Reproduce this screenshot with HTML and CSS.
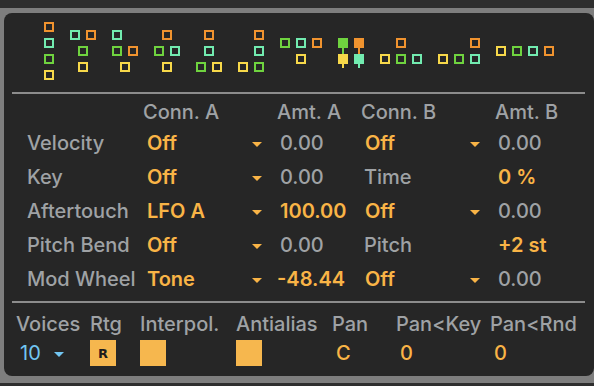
FILE: index.html
```html
<!DOCTYPE html>
<html lang="en">
<head>
    <meta charset="UTF-8">
    <title>Operator - Global</title>
    <link rel="stylesheet" href="styles.css">
</head>
<body>
    <div class="frame">
        <div class="panel">
            <!-- algorithm selector -->
            <svg class="algos" width="590" height="79" viewBox="0 0 590 79">
                <g class="box">
                    <rect class="o" x="41" y="10" width="8" height="8"/>
                    <rect class="a" x="41" y="26" width="8" height="8"/>
                    <rect class="g" x="41" y="42" width="8" height="8"/>
                    <rect class="y" x="41" y="58" width="8" height="8"/>

                    <rect class="a" x="67" y="18" width="8" height="8"/>
                    <rect class="o" x="83" y="18" width="8" height="8"/>
                    <rect class="g" x="75" y="34" width="8" height="8"/>
                    <rect class="y" x="75" y="50" width="8" height="8"/>

                    <rect class="a" x="109" y="18" width="8" height="8"/>
                    <rect class="g" x="109" y="34" width="8" height="8"/>
                    <rect class="o" x="125" y="34" width="8" height="8"/>
                    <rect class="y" x="117" y="50" width="8" height="8"/>

                    <rect class="o" x="159" y="18" width="8" height="8"/>
                    <rect class="g" x="151" y="34" width="8" height="8"/>
                    <rect class="a" x="167" y="34" width="8" height="8"/>
                    <rect class="y" x="159" y="50" width="8" height="8"/>

                    <rect class="o" x="201" y="18" width="8" height="8"/>
                    <rect class="a" x="201" y="34" width="8" height="8"/>
                    <rect class="g" x="193" y="50" width="8" height="8"/>
                    <rect class="y" x="209" y="50" width="8" height="8"/>

                    <rect class="o" x="251" y="18" width="8" height="8"/>
                    <rect class="a" x="251" y="34" width="8" height="8"/>
                    <rect class="y" x="235" y="50" width="8" height="8"/>
                    <rect class="g" x="251" y="50" width="8" height="8"/>

                    <rect class="g" x="277" y="26" width="8" height="8"/>
                    <rect class="a" x="293" y="26" width="8" height="8"/>
                    <rect class="o" x="309" y="26" width="8" height="8"/>
                    <rect class="y" x="293" y="42" width="8" height="8"/>

                    <rect class="o" x="393" y="26" width="8" height="8"/>
                    <rect class="y" x="377" y="42" width="8" height="8"/>
                    <rect class="g" x="393" y="42" width="8" height="8"/>
                    <rect class="a" x="409" y="42" width="8" height="8"/>

                    <rect class="o" x="467" y="26" width="8" height="8"/>
                    <rect class="y" x="435" y="42" width="8" height="8"/>
                    <rect class="g" x="451" y="42" width="8" height="8"/>
                    <rect class="a" x="467" y="42" width="8" height="8"/>

                    <rect class="y" x="493" y="34" width="8" height="8"/>
                    <rect class="g" x="509" y="34" width="8" height="8"/>
                    <rect class="a" x="525" y="34" width="8" height="8"/>
                    <rect class="o" x="541" y="34" width="8" height="8"/>
                </g>
                <!-- selected algorithm -->
                <g class="fill">
                    <rect class="g" x="338" y="35" width="2" height="6"/>
                    <rect class="y" x="338" y="51" width="2" height="4"/>
                    <rect class="o" x="354" y="35" width="2" height="6"/>
                    <rect class="a" x="354" y="51" width="2" height="4"/>
                    <rect class="g" x="334" y="25" width="10" height="10"/>
                    <rect class="o" x="350" y="25" width="10" height="10"/>
                    <rect class="y" x="334" y="41" width="10" height="10"/>
                    <rect class="a" x="350" y="41" width="10" height="10"/>
                </g>
            </svg>

            <div class="rule"></div>

            <div class="matrix">
                <div></div>
                <div class="hd">Conn. A</div>
                <div class="hd">Amt. A</div>
                <div class="hd">Conn. B</div>
                <div class="hd">Amt. B</div>

                <div class="lbl">Velocity</div>
                <div class="menu">Off</div>
                <div class="num">0.00</div>
                <div class="menu">Off</div>
                <div class="num">0.00</div>

                <div class="lbl">Key</div>
                <div class="menu">Off</div>
                <div class="num">0.00</div>
                <div class="num">Time</div>
                <div class="num on">0 %</div>

                <div class="lbl">Aftertouch</div>
                <div class="menu">LFO A</div>
                <div class="num on">100.00</div>
                <div class="menu">Off</div>
                <div class="num">0.00</div>

                <div class="lbl">Pitch Bend</div>
                <div class="menu">Off</div>
                <div class="num">0.00</div>
                <div class="num">Pitch</div>
                <div class="num on">+2 st</div>

                <div class="lbl">Mod Wheel</div>
                <div class="menu">Tone</div>
                <div class="num on neg">-48.44</div>
                <div class="menu">Off</div>
                <div class="num">0.00</div>
            </div>

            <div class="rule"></div>

            <div class="globals">
                <div class="lbl">Voices</div>
                <div class="lbl">Rtg</div>
                <div class="lbl">Interpol.</div>
                <div class="lbl">Antialias</div>
                <div class="lbl">Pan</div>
                <div class="lbl">Pan&lt;Key</div>
                <div class="lbl">Pan&lt;Rnd</div>

                <div class="voices">10<span class="arrow"></span></div>
                <div><span class="toggle">R</span></div>
                <div><span class="toggle"></span></div>
                <div><span class="toggle"></span></div>
                <div class="num on">C</div>
                <div class="num on">0</div>
                <div class="num on">0</div>
            </div>
        </div>
    </div>
</body>
</html>
```

FILE: styles.css
```css
body {
    margin: 0;
    height: 386px;
    overflow: hidden;
    background-color: #2e2e2e;
    font-family: Inter, "Noto Sans", sans-serif;
    font-size: 20px;
    font-weight: 500;
    color: #9fa2a5;
}

.frame {
    margin-top: 8px;
    padding: 5px 0 7px 4px;
    background-color: #7e7e7e;
}

.panel {
    height: 363px;
    box-sizing: border-box;
    background-color: #262626;
    border-radius: 8px;
}

.algos {
    display: block;
}

.algos .box rect {
    fill: none;
    stroke-width: 2;
}

.algos .box .o { stroke: #f0932f; }
.algos .box .a { stroke: #72ebb0; }
.algos .box .g { stroke: #6fd33f; }
.algos .box .y { stroke: #f7d84a; }

.algos .fill .o { fill: #f0932f; }
.algos .fill .a { fill: #72ebb0; }
.algos .fill .g { fill: #6fd33f; }
.algos .fill .y { fill: #f7d84a; }

.rule {
    height: 2px;
    margin: 0 9px 0 8px;
    background-color: #8c8c8c;
}

/* modulation matrix */
.matrix {
    display: grid;
    grid-template-columns: 116px 134px 84px 134px 1fr;
    grid-template-rows: 28px repeat(5, 34px);
    padding: 4px 0 5px 23px;
}

.matrix > div {
    line-height: 34px;
    white-space: nowrap;
}

.matrix .hd {
    line-height: 28px;
}

.menu {
    display: flex;
    justify-content: space-between;
    align-items: center;
    padding: 0 15px 0 4px;
    color: #f9b446;
    font-weight: 600;
}

.menu::after {
    content: "";
    margin-top: 2px;
    border-left: 5px solid transparent;
    border-right: 5px solid transparent;
    border-top: 5px solid #f9b446;
}

.num {
    padding-left: 3px;
}

.num.neg {
    padding-left: 0;
}

.on {
    color: #f9b446;
    font-weight: 600;
}

/* global settings */
.globals {
    display: grid;
    grid-template-columns: 74px 50px 96px 96px 64px 94px 1fr;
    grid-template-rows: 24px 26px;
    row-gap: 4px;
    padding: 9px 0 0 12px;
}

.globals .lbl {
    line-height: 24px;
    white-space: nowrap;
}

.globals .num,
.voices {
    line-height: 26px;
}

.globals .num {
    padding-left: 4px;
    font-weight: 500;
}

.voices {
    display: flex;
    align-items: center;
    padding-left: 4px;
    color: #72c6f2;
    font-weight: 400;
}

.voices .arrow {
    margin: 2px 0 0 13px;
    border-left: 5px solid transparent;
    border-right: 5px solid transparent;
    border-top: 5px solid #72c6f2;
}

.toggle {
    display: flex;
    justify-content: center;
    align-items: center;
    width: 26px;
    height: 26px;
    background-color: #f6b74e;
    color: #1c1c1c;
    font-family: "DejaVu Sans", sans-serif;
    font-size: 13px;
    font-weight: bold;
}
```
